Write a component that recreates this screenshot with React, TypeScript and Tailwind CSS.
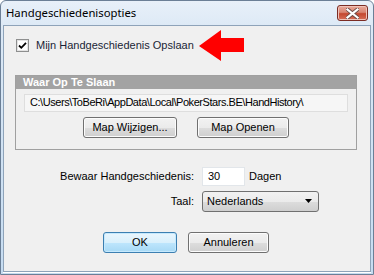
import React from 'react';

const font = { fontFamily: '"Liberation Sans", Arial, sans-serif' };

function WinButton({ label, primary = false, width }: { label: string; primary?: boolean; width: string }) {
  return (
    <button
      className={
        primary
          ? `${width} h-[21px] rounded-[3px] border border-[#3c7fb1] bg-[linear-gradient(to_bottom,#eaf6fd_0%,#d9f0fc_50%,#bee6fd_51%,#a7d9f5_100%)] text-[11px] text-black shadow-[inset_0_0_0_1px_#c6e9fd]`
          : `${width} h-[21px] rounded-[3px] border border-[#707070] bg-[linear-gradient(to_bottom,#f2f2f2_0%,#ebebeb_50%,#dddddd_51%,#cfcfcf_100%)] text-[11px] text-black shadow-[inset_0_0_0_1px_#fcfcfc]`
      }
    >
      {label}
    </button>
  );
}

export default function App() {
  return (
    <div style={font} className="relative w-[374px] h-[275px] overflow-hidden">
      <div className="flex h-full w-full flex-col rounded-t-[6px] border border-[#6b7f96] bg-[linear-gradient(to_bottom,#e8f0f9,#dbe8f5_30px,#c6dcf1)]">
        {/* title bar */}
        <div className="flex h-[24px] items-center justify-between pl-[5px] pr-[5px]">
          <span className="text-[11.3px] text-black" style={{ fontFamily: '"Noto Sans", "Open Sans", sans-serif' }}>
            Handgeschiedenisopties
          </span>
          <div className="flex h-[16px] w-[31px] items-center justify-center rounded-[3px] border border-[#7b2c24] bg-[linear-gradient(to_bottom,#e9a99b_0%,#d98673_45%,#c4472f_55%,#d7705a_100%)] shadow-[inset_0_0_0_1px_#f0c2b8]">
            <svg width="13" height="11" viewBox="0 0 13 11">
              <path d="M1.5 1.5 L11.5 9.5 M11.5 1.5 L1.5 9.5" stroke="#6b4a46" strokeWidth="4" strokeLinecap="square" />
              <path d="M1.5 1.5 L11.5 9.5 M11.5 1.5 L1.5 9.5" stroke="#ffffff" strokeWidth="2.2" strokeLinecap="square" />
            </svg>
          </div>
        </div>

        {/* client area */}
        <div className="mx-[2px] mb-[2px] flex flex-1 flex-col border border-[#8ea3b9] bg-[#f0f0f0] shadow-[0_1px_0_#ffffff]">
          <div className="mt-[11px] ml-[12px] flex items-center">
            <div className="flex h-[13px] w-[13px] items-center justify-center border border-[#8e8f8f] bg-white shadow-[inset_0_0_0_1px_#e4e4e4]">
              <svg width="9" height="9" viewBox="0 0 9 9">
                <path d="M1 4.5 L3.3 6.8 L8 1.8" stroke="#000" strokeWidth="1.8" fill="none" />
              </svg>
            </div>
            <span className="ml-[7px] text-[11px] text-[#1a1f36]">Mijn Handgeschiedenis Opslaan</span>
          </div>

          {/* group box */}
          <div className="mt-[21px] ml-[11px] w-[342px] border border-[#a0a0a0]">
            <div className="flex h-[13px] items-center bg-[#a3a3a3] pl-[7px] text-[11px] font-bold text-white">
              Waar Op Te Slaan
            </div>
            <div className="mx-[8px] mt-[5px] flex h-[18px] items-center border border-[#dedede] bg-[#f6f6f6] pl-[5px] text-[11px] tracking-[-0.45px] text-black">
              C:\Users\ToBeRi\AppData\Local\PokerStars.BE\HandHistory\
            </div>
            <div className="mt-[5px] mb-[11px] flex justify-center gap-[20px]">
              <WinButton label="Map Wijzigen..." width="w-[94px]" />
              <WinButton label="Map Openen" width="w-[92px]" />
            </div>
          </div>

          {/* settings */}
          <div className="mt-[17px] flex items-center">
            <span className="w-[198px] pr-[8px] text-right text-[11px] text-black">Bewaar Handgeschiedenis:</span>
            <div className="flex h-[19px] w-[43px] items-center border border-[#e2e6ea] bg-white pl-[5px] text-[11px] text-black">
              30
            </div>
            <span className="ml-[4px] text-[11px] text-black">Dagen</span>
          </div>
          <div className="mt-[5px] flex items-center">
            <span className="w-[198px] pr-[8px] text-right text-[11px] text-black">Taal:</span>
            <div className="flex h-[21px] w-[117px] items-center justify-between rounded-[3px] border border-[#707070] bg-[linear-gradient(to_bottom,#f2f2f2_0%,#ebebeb_50%,#dddddd_51%,#cfcfcf_100%)] pl-[4px] pr-[6px] text-[11px] text-black">
              <span>Nederlands</span>
              <svg width="7" height="4" viewBox="0 0 7 4">
                <path d="M0 0 H7 L3.5 4 Z" fill="#000" />
              </svg>
            </div>
          </div>

          <div className="mt-[20px] ml-[99px] flex gap-[11px]">
            <WinButton label="OK" primary width="w-[74px]" />
            <WinButton label="Annuleren" width="w-[81px]" />
          </div>
        </div>
      </div>

      {/* red annotation arrow */}
      <svg className="absolute left-[199px] top-[30px]" width="46" height="32" viewBox="0 0 46 32">
        <polygon points="0,16 22,0 22,8 45,8 45,22 22,22 22,31" fill="#ff0000" />
      </svg>
    </div>
  );
}
